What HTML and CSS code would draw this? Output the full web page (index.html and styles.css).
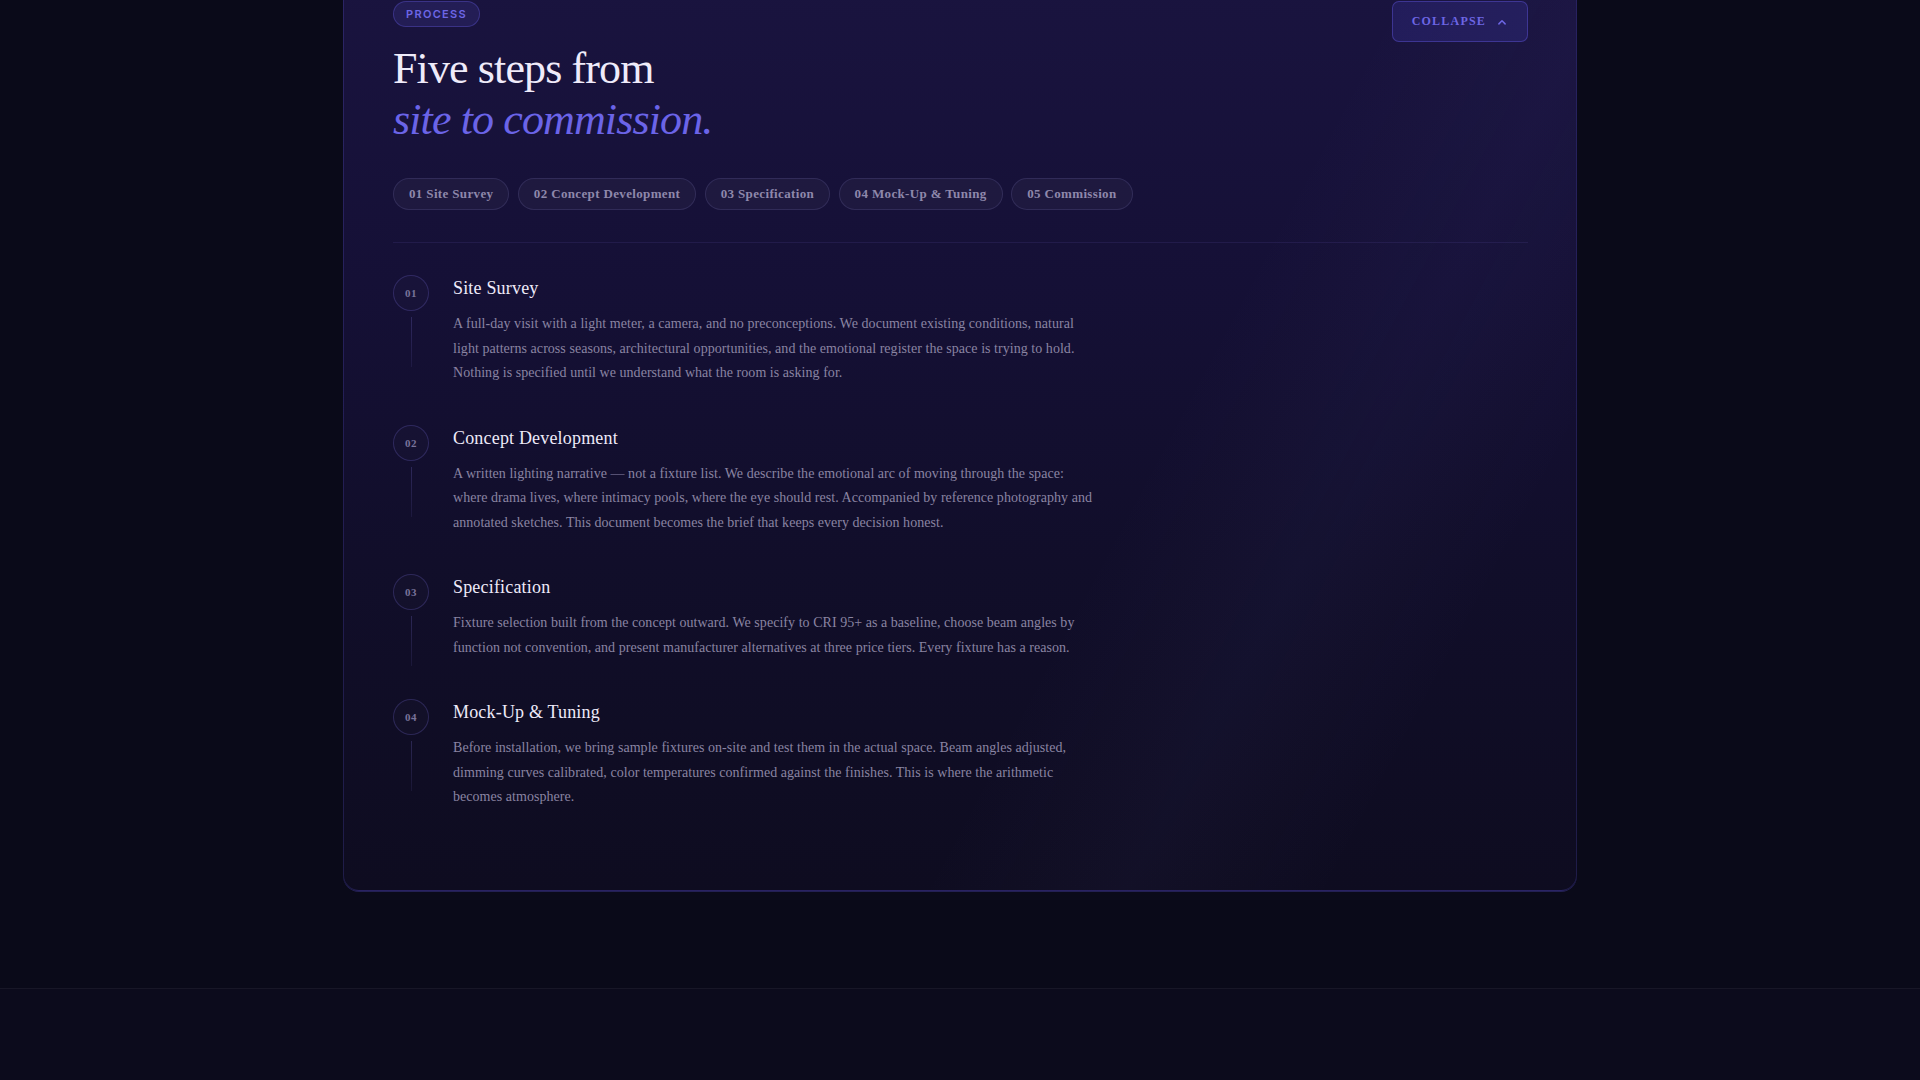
FILE: index.html
```html
<!DOCTYPE html>
<html lang="en">
    <head>
        <meta charset="UTF-8">
        <title>Process</title>
        <link rel="stylesheet" href="styles.css">
    </head>
    <body>
        <section class="process">
            <div class="card">
                <header class="card-head">
                    <div>
                        <span class="badge">Process</span>
                        <h2 class="title">Five steps from<br><em>site to commission.</em></h2>
                    </div>
                    <button class="toggle">
                        Collapse
                        <svg width="10" height="10" viewBox="0 0 16 16"><path d="M3 11 L8 6 L13 11" fill="none" stroke="currentColor" stroke-width="2.4" stroke-linecap="round" stroke-linejoin="round"/></svg>
                    </button>
                </header>

                <nav class="chips">
                    <span class="chip">01 Site Survey</span>
                    <span class="chip">02 Concept Development</span>
                    <span class="chip">03 Specification</span>
                    <span class="chip">04 Mock-Up &amp; Tuning</span>
                    <span class="chip">05 Commission</span>
                </nav>

                <ol class="steps">
                    <li class="step">
                        <div class="marker"><span class="num">01</span><span class="rail"></span></div>
                        <div class="step-body">
                            <h3>Site Survey</h3>
                            <p>A full-day visit with a light meter, a camera, and no preconceptions. We document existing conditions, natural light patterns across seasons, architectural opportunities, and the emotional register the space is trying to hold. Nothing is specified until we understand what the room is asking for.</p>
                        </div>
                    </li>
                    <li class="step">
                        <div class="marker"><span class="num">02</span><span class="rail"></span></div>
                        <div class="step-body">
                            <h3>Concept Development</h3>
                            <p>A written lighting narrative — not a fixture list. We describe the emotional arc of moving through the space: where drama lives, where intimacy pools, where the eye should rest. Accompanied by reference photography and annotated sketches. This document becomes the brief that keeps every decision honest.</p>
                        </div>
                    </li>
                    <li class="step">
                        <div class="marker"><span class="num">03</span><span class="rail"></span></div>
                        <div class="step-body">
                            <h3>Specification</h3>
                            <p>Fixture selection built from the concept outward. We specify to CRI 95+ as a baseline, choose beam angles by function not convention, and present manufacturer alternatives at three price tiers. Every fixture has a reason.</p>
                        </div>
                    </li>
                    <li class="step">
                        <div class="marker"><span class="num">04</span><span class="rail"></span></div>
                        <div class="step-body">
                            <h3>Mock-Up &amp; Tuning</h3>
                            <p>Before installation, we bring sample fixtures on-site and test them in the actual space. Beam angles adjusted, dimming curves calibrated, color temperatures confirmed against the finishes. This is where the arithmetic becomes atmosphere.</p>
                        </div>
                    </li>
                </ol>
            </div>
        </section>
        <footer class="site-foot"></footer>
    </body>
</html>
```

FILE: styles.css
```css
body {
    margin: 0;
    background: #0a0a19;
    font-family: "Liberation Serif", "Times New Roman", serif;
    color: #ece8f8;
}
.process {
    padding-bottom: 97px;
}
.card {
    box-sizing: border-box;
    width: 1234px;
    margin: -48px auto 0;
    padding: 48px 48px 48px 49px;
    border: 1px solid rgba(96, 86, 220, 0.22);
    border-radius: 16px;
    box-shadow: 0 1px 0 rgba(96, 86, 220, 0.3);
    background:
        linear-gradient(118deg, transparent 62%, rgba(130, 120, 230, 0.035) 74%, transparent 86%),
        linear-gradient(180deg, #1a1440 0%, #151036 35%, #110e2a 65%, #0e0c20 100%);
}
.card-head {
    display: flex;
    justify-content: space-between;
    align-items: flex-start;
}
.badge {
    display: inline-block;
    height: 24px;
    line-height: 24px;
    padding: 0 12px;
    border: 1px solid rgba(99, 91, 230, 0.35);
    border-radius: 14px;
    background: rgba(99, 91, 230, 0.14);
    font-family: Inter, "Liberation Sans", sans-serif;
    font-size: 11px;
    font-weight: 600;
    letter-spacing: 0.12em;
    text-transform: uppercase;
    color: #6d66e6;
}
.title {
    margin: 17px 0 0;
    font-size: 44px;
    font-weight: 400;
    line-height: 1.15;
    letter-spacing: -0.02em;
    color: #efebfa;
}
.title em {
    color: #6b64e8;
}
.toggle {
    display: inline-flex;
    align-items: center;
    gap: 11px;
    height: 41px;
    padding: 0 20px 0 19px;
    border: 1px solid rgba(99, 91, 230, 0.4);
    border-radius: 7px;
    background: rgba(70, 62, 190, 0.22);
    font-family: inherit;
    font-size: 12px;
    font-weight: 700;
    letter-spacing: 0.1em;
    text-transform: uppercase;
    color: #6d66e4;
    cursor: pointer;
}
.chips {
    display: flex;
    flex-wrap: wrap;
    gap: 8.5px;
    margin-top: 33px;
    padding-bottom: 32px;
    border-bottom: 1px solid rgba(120, 110, 210, 0.12);
}
.chip {
    padding: 8px 15px;
    line-height: 14px;
    border: 1px solid rgba(150, 140, 220, 0.16);
    border-radius: 20px;
    background: rgba(255, 255, 255, 0.035);
    font-size: 13px;
    font-weight: 700;
    letter-spacing: 0.027em;
    color: #8e88ab;
}
.steps {
    list-style: none;
    margin: 0;
    padding: 32px 0 32px;
    display: flex;
    flex-direction: column;
    gap: 39px;
}
.step {
    display: flex;
    gap: 24px;
}
/* the rail hangs a little past short steps, so it doesn't set the row height */
.marker {
    display: flex;
    flex-direction: column;
    align-items: center;
    width: 36px;
    flex-shrink: 0;
    margin-bottom: -10px;
}
.num {
    box-sizing: border-box;
    display: flex;
    align-items: center;
    justify-content: center;
    width: 36px;
    height: 36px;
    border: 1px solid rgba(110, 100, 210, 0.28);
    border-radius: 50%;
    background: rgba(255, 255, 255, 0.015);
    font-size: 11px;
    font-weight: 700;
    letter-spacing: 0.05em;
    color: #79739a;
}
.rail {
    width: 1px;
    height: 50px;
    margin-top: 6px;
    background: linear-gradient(180deg, rgba(120, 110, 210, 0.26), rgba(120, 110, 210, 0.1));
}
.step-body h3 {
    margin: 0;
    font-size: 18px;
    font-weight: 400;
    line-height: 1.5;
    letter-spacing: 0.01em;
    color: #eeeaf9;
}
.step-body p {
    max-width: 640px;
    margin: 10px 0 0;
    font-size: 14px;
    line-height: 1.75;
    letter-spacing: 0.003em;
    color: #8a84a2;
}
.site-foot {
    height: 120px;
    border-top: 1px solid rgba(255, 255, 255, 0.05);
    background: #0c0b1c;
}
```
